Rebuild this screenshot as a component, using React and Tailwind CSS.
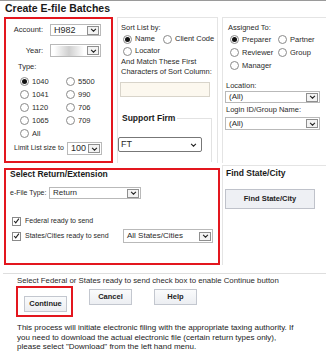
import React from 'react';

function Chevron({ className = "" }) {
  return (
    <svg viewBox="0 0 8 5" className={className}>
      <path d="M1 1 L4 4 L7 1" fill="none" stroke="#222" strokeWidth="1.3" />
    </svg>
  );
}

function Select({ value, className = "", text = "text-[8px]", blur = false }) {
  return (
    <div className={`flex items-center border border-[#b9b9b9] bg-white ${className}`}>
      <span className={`flex-1 pl-[3px] leading-none whitespace-nowrap overflow-hidden ${text}`}>
        {blur ? <span className="block h-[10px] w-[30px] bg-linear-to-r from-white via-[#cfcfcf] to-white" /> : value}
      </span>
      <span className="mr-[1px] flex h-[9px] w-[12px] items-center justify-center border border-[#8f8f8f] bg-[#f3f3f3]">
        <Chevron className="h-[4px] w-[7px]" />
      </span>
    </div>
  );
}

function Radio({ checked }) {
  return (
    <span className="flex h-[9px] w-[9px] shrink-0 items-center justify-center rounded-full border border-[#8a8a8a] bg-white">
      {checked && <span className="h-[5px] w-[5px] rounded-full bg-[#111]" />}
    </span>
  );
}

function Check() {
  return (
    <span className="flex h-[9px] w-[9px] shrink-0 items-center justify-center border border-[#8a8a8a] bg-white">
      <svg viewBox="0 0 9 9" className="h-[8px] w-[8px]">
        <path d="M1.5 4.5 L3.5 6.8 L7.6 1.5" fill="none" stroke="#222" strokeWidth="1.4" />
      </svg>
    </span>
  );
}

function RadioItem({ label, checked, width = "" }) {
  return (
    <span className={`flex items-center whitespace-nowrap ${width}`}>
      <Radio checked={checked} />
      <span className="ml-[3px]">{label}</span>
    </span>
  );
}

function Button({ label, className = "" }) {
  return (
    <button className={`h-[16px] w-[43px] shrink-0 border border-[#c3c7cf] bg-linear-to-b from-[#fafbfc] to-[#eceef2] text-[7.5px] font-bold text-[#222] ${className}`}>
      {label}
    </button>
  );
}

export default function App() {
  return (
    <div className="h-[361px] w-[326px] overflow-hidden border-t border-[#9a9a9a] bg-white font-['Liberation_Sans',Arial,sans-serif] text-[#2a2a2a]">
      <h1 className="h-[16px] pl-[5px] text-[10.5px] font-bold leading-[15px] text-[#1a1a1a]">Create E-file Batches</h1>

      {/* top row */}
      <div className="flex items-stretch pl-[4px] text-[7.5px]">
        <div className="w-[109px] shrink-0 border-2 border-[#e3161e] pb-[6px]">
          <div className="mt-[5px] flex h-[12px] items-center">
            <span className="w-[44px] pr-[7px] text-right">Account:</span>
            <Select value="H982" className="h-[12px] w-[51px]" text="text-[9px]" />
          </div>
          <div className="mt-[8px] flex h-[13px] items-center">
            <span className="w-[44px] pr-[7px] text-right">Year:</span>
            <Select blur className="h-[13px] w-[51px]" />
          </div>
          <div className="mt-[5px] pl-[12px] leading-[10px]">Type:</div>
          <div className="mt-[3px] grid grid-cols-[46px_auto] pl-[14px]">
            {[["1040", "5500"], ["1041", "990"], ["1120", "706"], ["1065", "709"]].map(([a, b], i) => (
              <React.Fragment key={a}>
                <div className="flex h-[13px] items-center"><RadioItem label={a} checked={i === 0} /></div>
                <div className="flex h-[13px] items-center"><RadioItem label={b} /></div>
              </React.Fragment>
            ))}
            <div className="flex h-[13px] items-center"><RadioItem label="All" /></div>
          </div>
          <div className="mt-[2px] flex h-[13px] items-center pl-[8px]">
            <span className="w-[53px] whitespace-nowrap text-[7px]">Limit List size to</span>
            <Select value="100" className="h-[13px] w-[35px]" text="text-[9px]" />
          </div>
        </div>

        <div className="ml-[4px] w-[101px] shrink-0 border border-b-0 border-[#e4e4e4]">
          <div className="pl-[3px] pt-[5px]">
            <div className="leading-[10px]">Sort List by:</div>
            <div className="flex h-[12px] items-center pl-[2px]">
              <RadioItem label="Name" checked width="w-[40px]" />
              <RadioItem label="Client Code" />
            </div>
            <div className="flex h-[12px] items-center pl-[2px]">
              <RadioItem label="Locator" />
            </div>
            <div className="whitespace-nowrap leading-[10px]">And Match These First<br />Characters of Sort Column:</div>
            <div className="-ml-[1px] mt-[5px] h-[15px] w-[90px] border border-[#d8d4ca] bg-[#fcf8ef]" />
          </div>
          <div className="mr-[5px] mt-[16px]">
            <div className="flex h-[10px] items-stretch">
              <span className="pl-[4px] pr-[2px] text-[8.5px] font-bold leading-[10px] text-[#1a1a1a]">Support Firm</span>
              <span className="mt-[5px] flex-1 border-r border-t border-[#e2e2e2]" />
            </div>
            <div className="border-r border-[#e2e2e2] pb-[10px] pt-[14px]">
              <div className="flex h-[15px] w-[84px] items-center rounded-[2px] border border-[#777] bg-white">
                <span className="flex-1 pl-[2px] text-[9px]">FT</span>
                <Chevron className="mr-[4px] h-[4px] w-[7px]" />
              </div>
            </div>
          </div>
        </div>

        <div className="ml-[4px] flex-1 border-l border-t border-[#e4e4e4]">
          <div className="pl-[5px] pt-[5px] leading-[10px]">Assigned To:</div>
          <div className="grid grid-cols-[48px_auto] pl-[7px]">
            <div className="flex h-[13px] items-center"><RadioItem label="Preparer" checked /></div>
            <div className="flex h-[13px] items-center"><RadioItem label="Partner" /></div>
            <div className="flex h-[13px] items-center"><RadioItem label="Reviewer" /></div>
            <div className="flex h-[13px] items-center"><RadioItem label="Group" /></div>
            <div className="flex h-[13px] items-center"><RadioItem label="Manager" /></div>
          </div>
          <div className="mt-[9px] pl-[3px] leading-[10px]">Location:</div>
          <Select value="(All)" className="ml-[2px] h-[12px] w-[95px]" />
          <div className="mt-[2px] pl-[3px] leading-[10px]">Login ID/Group Name:</div>
          <Select value="(All)" className="ml-[2px] mt-[2px] h-[13px] w-[95px]" />
        </div>
      </div>

      {/* second row */}
      <div className="mt-[2px] flex items-stretch pl-[4px] text-[7px]">
        <div className="mt-[3px] w-[216px] shrink-0 border-2 border-[#e3161e] pb-[20px]">
          <div className="-mt-[1px] pl-[4px] text-[8.5px] font-bold leading-[10px] text-[#1a1a1a]">Select Return/Extension</div>
          <div className="mt-[8px] flex h-[12px] items-center pl-[4px]">
            <span className="w-[39px] whitespace-nowrap">e-File Type:</span>
            <Select value="Return" className="h-[12px] w-[92px]" />
          </div>
          <div className="mt-[16px] flex h-[12px] items-center pl-[6px]">
            <Check />
            <span className="ml-[4px] whitespace-nowrap">Federal ready to send</span>
          </div>
          <div className="mt-[2px] flex h-[14px] items-center pl-[6px]">
            <Check />
            <span className="ml-[4px] w-[98px] whitespace-nowrap">States/Cities ready to send</span>
            <Select value="All States/Cities" className="h-[14px] w-[90px]" />
          </div>
        </div>
        <div className="ml-[2px] flex-1 border-l border-t border-[#e4e4e4]">
          <div className="pl-[3px] pt-[2px] text-[8.5px] font-bold leading-[10px] text-[#1a1a1a]">Find State/City</div>
          <button className="ml-[2px] mt-[11px] h-[20px] w-[90px] border border-[#bfc2ca] bg-[#eef0f4] text-[7.5px] font-bold text-[#222]">
            Find State/City
          </button>
        </div>
      </div>

      <div className="ml-[3px] mt-[8px] border-t border-[#dedede]" />

      <div className="mt-[2px] whitespace-nowrap pl-[17px] text-[7.8px] leading-[10px]">
        Select Federal or States ready to send check box to enable Continue button
      </div>

      <div className="flex items-start pl-[16px]">
        <div className="w-[57px] shrink-0 border-2 border-[#e3161e] pb-[2px] pl-[6px] pt-[1px]">
          <Button label="Continue" />
        </div>
        <Button label="Cancel" className="ml-[16px] mt-[3px]" />
        <Button label="Help" className="ml-[22px] mt-[3px]" />
      </div>

      <p className="mt-[6px] whitespace-nowrap pl-[17px] text-[8px] leading-[9.5px] text-[#222]">
        This process will initiate electronic filing with the appropriate taxing authority. If<br />
        you need to download the actual electronic file (certain return types only),<br />
        please select "Download" from the left hand menu.
      </p>
    </div>
  );
}
